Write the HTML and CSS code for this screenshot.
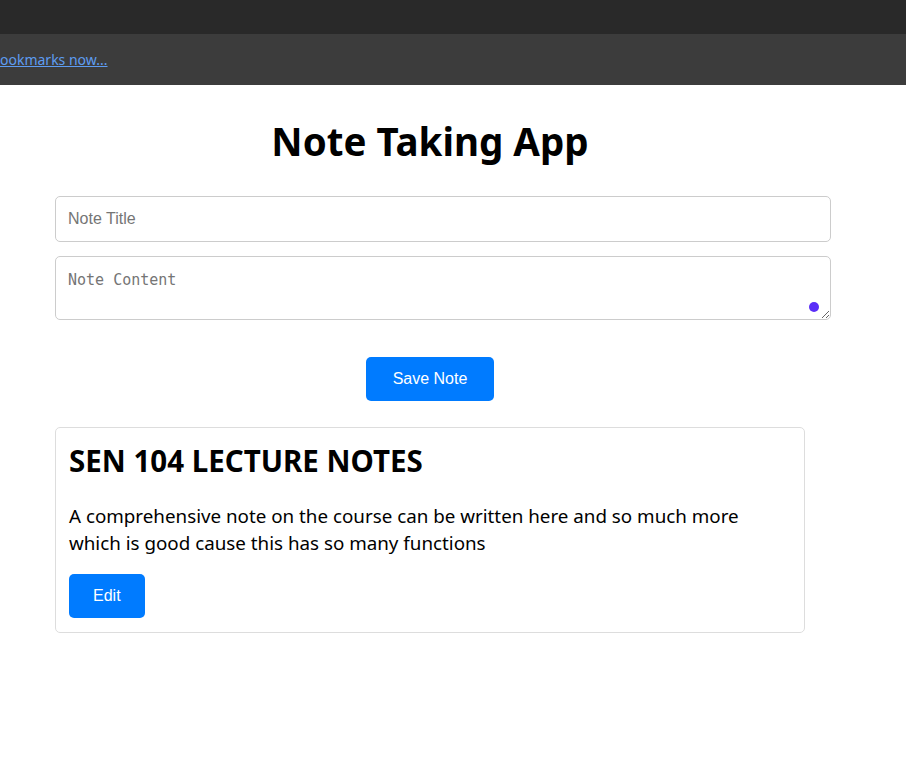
FILE: index.html
```html
<!DOCTYPE html>
<html>
<head>
<meta charset="utf-8">
<link rel="stylesheet" href="styles.css">
</head>
<body>
<div class="chrome-top"></div>
<div class="bookmarks-bar"><a class="bm-link" href="#">ookmarks now...</a></div>
<main class="page">
  <div class="container">
    <h1 class="title">Note Taking App</h1>
    <input class="field" type="text" placeholder="Note Title">
    <div class="area-wrap">
      <textarea class="field area" placeholder="Note Content"></textarea>
      <span class="ext-dot"></span>
    </div>
    <div class="save-row"><button class="btn">Save Note</button></div>
    <div class="note-card">
      <h2 class="note-title">SEN 104 LECTURE NOTES</h2>
      <p class="note-text">A comprehensive note on the course can be written here and so much more which is good cause this has so many functions</p>
      <button class="btn btn-edit">Edit</button>
    </div>
  </div>
</main>
</body>
</html>
```
FILE: styles.css
```css
* { box-sizing: content-box; }
html, body { margin: 0; padding: 0; background: #fff; }
body { font-family: "Noto Sans", "Open Sans", sans-serif; color: #000; overflow: hidden; }
.chrome-top { height: 34px; background: #292929; }
.bookmarks-bar {
  height: 51px; background: #3c3c3c;
  display: flex; align-items: center; overflow: hidden;
}
.bm-link {
  font-family: "Noto Sans", sans-serif; font-size: 14px; color: #5e9cf2;
  text-decoration: underline; white-space: nowrap; margin-left: 0;
}
.page { padding-left: 55px; }
.container { width: 750px; }
.title {
  text-align: center; font-size: 38.5px; font-weight: 700;
  margin: 28px 0 27px; line-height: 56px;
}
.field {
  display: block; width: 750px; padding: 12px; border: 1px solid #ccc; border-radius: 5px;
  font-size: 16px; font-family: "Liberation Sans", Arial, sans-serif; color: #000;
  margin: 0; height: 20px; background: #fff;
}
.field::placeholder { color: #757575; }
.area-wrap { position: relative; margin-top: 14px; width: 776px; }
.area {
  height: 38px; font-family: "DejaVu Sans Mono", "Liberation Mono", monospace; font-size: 15px;
  resize: vertical; line-height: 18px; padding-top: 14px; padding-bottom: 10px;
}
.ext-dot {
  position: absolute; right: 12px; top: 46px; width: 10px; height: 10px;
  border-radius: 50%; background: #5a2ef7;
}
.save-row { display: flex; justify-content: center; margin-top: 37px; }
.btn {
  background: #007bff; color: #fff; border: none; border-radius: 5px;
  font-family: "Liberation Sans", Arial, sans-serif; font-size: 16px;
  padding: 0 27px; height: 44px; cursor: pointer;
}
.note-card {
  margin-top: 26px; width: 722px; border: 1px solid #ddd; border-radius: 5px;
  padding: 13px 13px 14px;
}
.note-title { font-size: 29.5px; font-weight: 700; margin: 1px 0 23px; line-height: 38px; }
.note-text { font-size: 18.8px; line-height: 27px; margin: 0 0 17px; }
.btn-edit { padding: 0 24px; }
```
